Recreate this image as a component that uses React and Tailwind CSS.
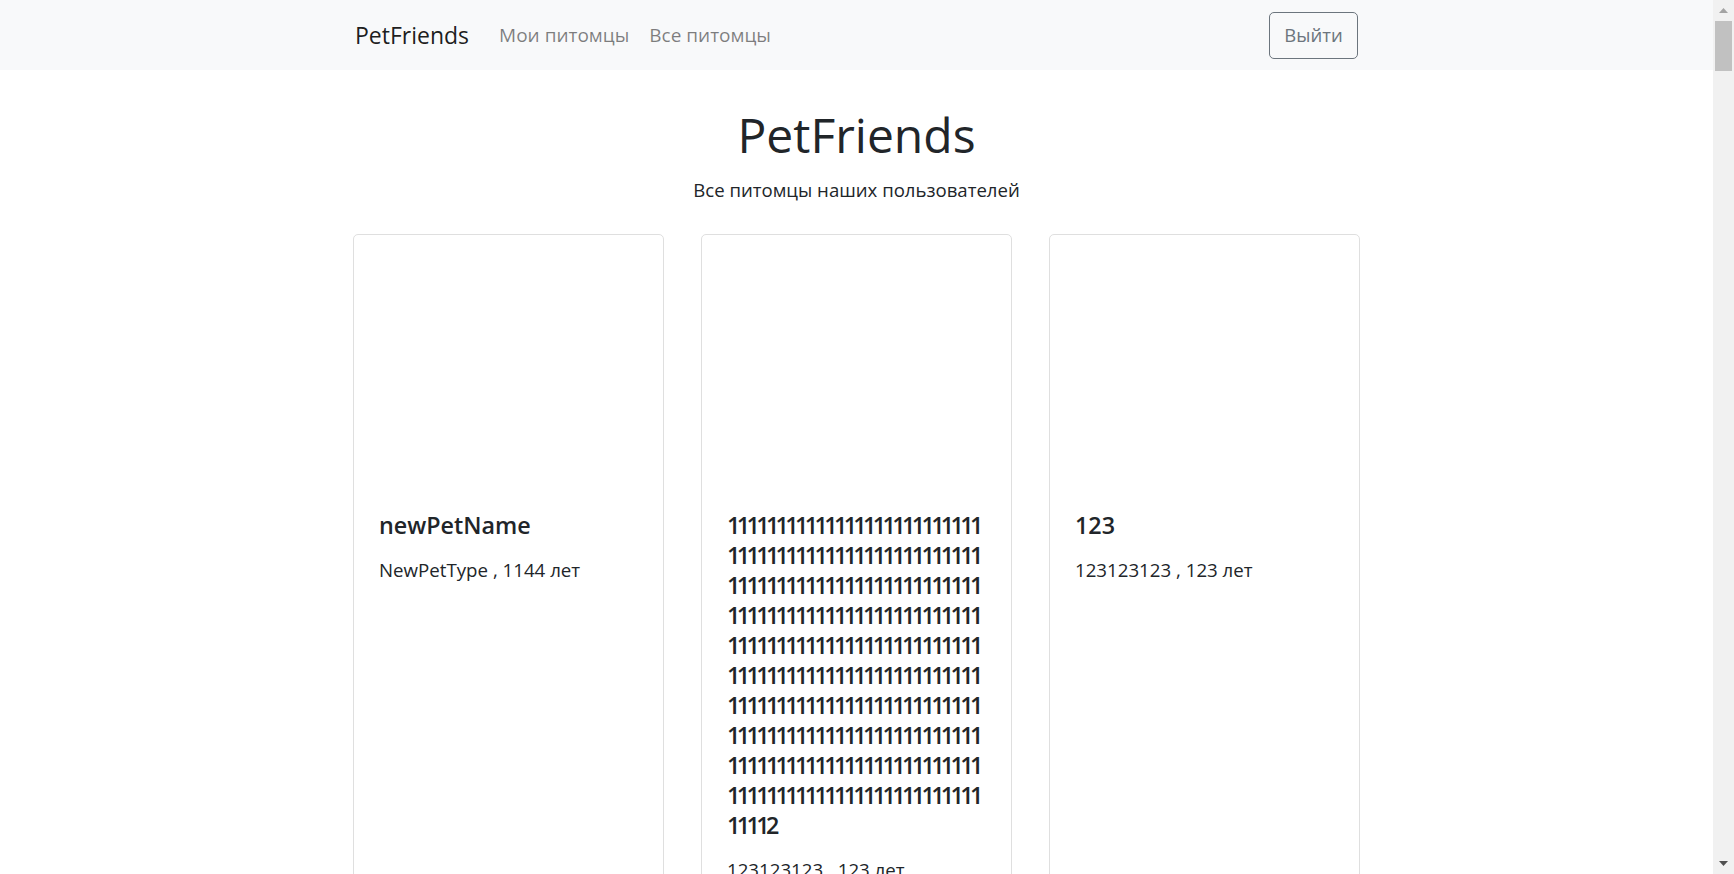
import React from "react";

const FONT = { fontFamily: '"Open Sans", "Noto Sans", sans-serif' };

function Card({ title, subtitle, titleClass = "" }) {
  return (
    <div className="border border-[#dfdfdf] rounded-[5px] bg-white h-[900px]">
      <div className="h-[250px]" />
      <div className="px-[25px] pt-[25px]">
        <h5 className={"text-[23.3px] leading-[30px] font-semibold text-[#212529] mb-[15px] " + titleClass}>
          {title}
        </h5>
        <p className="text-[18.7px] leading-[30px] text-[#212529]">{subtitle}</p>
      </div>
    </div>
  );
}

export default function App() {
  const ones = "1".repeat(264) + "2";
  return (
    <div className="flex h-[874px] overflow-hidden bg-white" style={FONT}>
      <div className="flex-1 min-w-0 flex flex-col">
        <nav className="h-[70px] shrink-0 bg-[#f8f9fa]">
          <div className="ml-[353px] w-[1007px] h-full flex items-center">
            <a className="text-[23px] leading-[38px] text-[rgba(0,0,0,0.9)] ml-[2px]">PetFriends</a>
            <div className="flex ml-[30px] gap-[20px] text-[19px] leading-[30px] text-[rgba(0,0,0,0.5)]">
              <a>Мои питомцы</a>
              <a>Все питомцы</a>
            </div>
            <button className="ml-auto mr-[2px] h-[47px] w-[89px] border border-[#6c757d] rounded-[5px] text-[18.5px] text-[#6c757d]">
              Выйти
            </button>
          </div>
        </nav>
        <main className="ml-[353px] w-[1007px]">
          <h1 className="mt-[35px] text-center text-[48px] leading-[60px] font-normal text-[#212529]">PetFriends</h1>
          <p className="mt-[10px] text-center text-[18.6px] leading-[30px] text-[#212529]">Все питомцы наших пользователей</p>
          <div className="mt-[29px] grid grid-cols-3 gap-[37px]">
            <Card title="newPetName" subtitle="NewPetType , 1144 лет" />
            <Card title={ones} subtitle="123123123 , 123 лет" titleClass="break-all tracking-[-3.6px]" />
            <Card title="123" subtitle="123123123 , 123 лет" />
          </div>
        </main>
      </div>
      <div className="w-[21px] shrink-0 bg-[#f1f1f1] flex flex-col">
        <div className="h-[21px] flex items-center justify-center">
          <svg width="9" height="5" viewBox="0 0 9 5"><path d="M0 5 L4.5 0 L9 5 Z" fill="#a3a3a3" /></svg>
        </div>
        <div className="mx-[2px] h-[50px] bg-[#c1c1c1]" />
        <div className="flex-1" />
        <div className="h-[21px] flex items-center justify-center">
          <svg width="9" height="5" viewBox="0 0 9 5"><path d="M0 0 L9 0 L4.5 5 Z" fill="#505050" /></svg>
        </div>
      </div>
    </div>
  );
}
